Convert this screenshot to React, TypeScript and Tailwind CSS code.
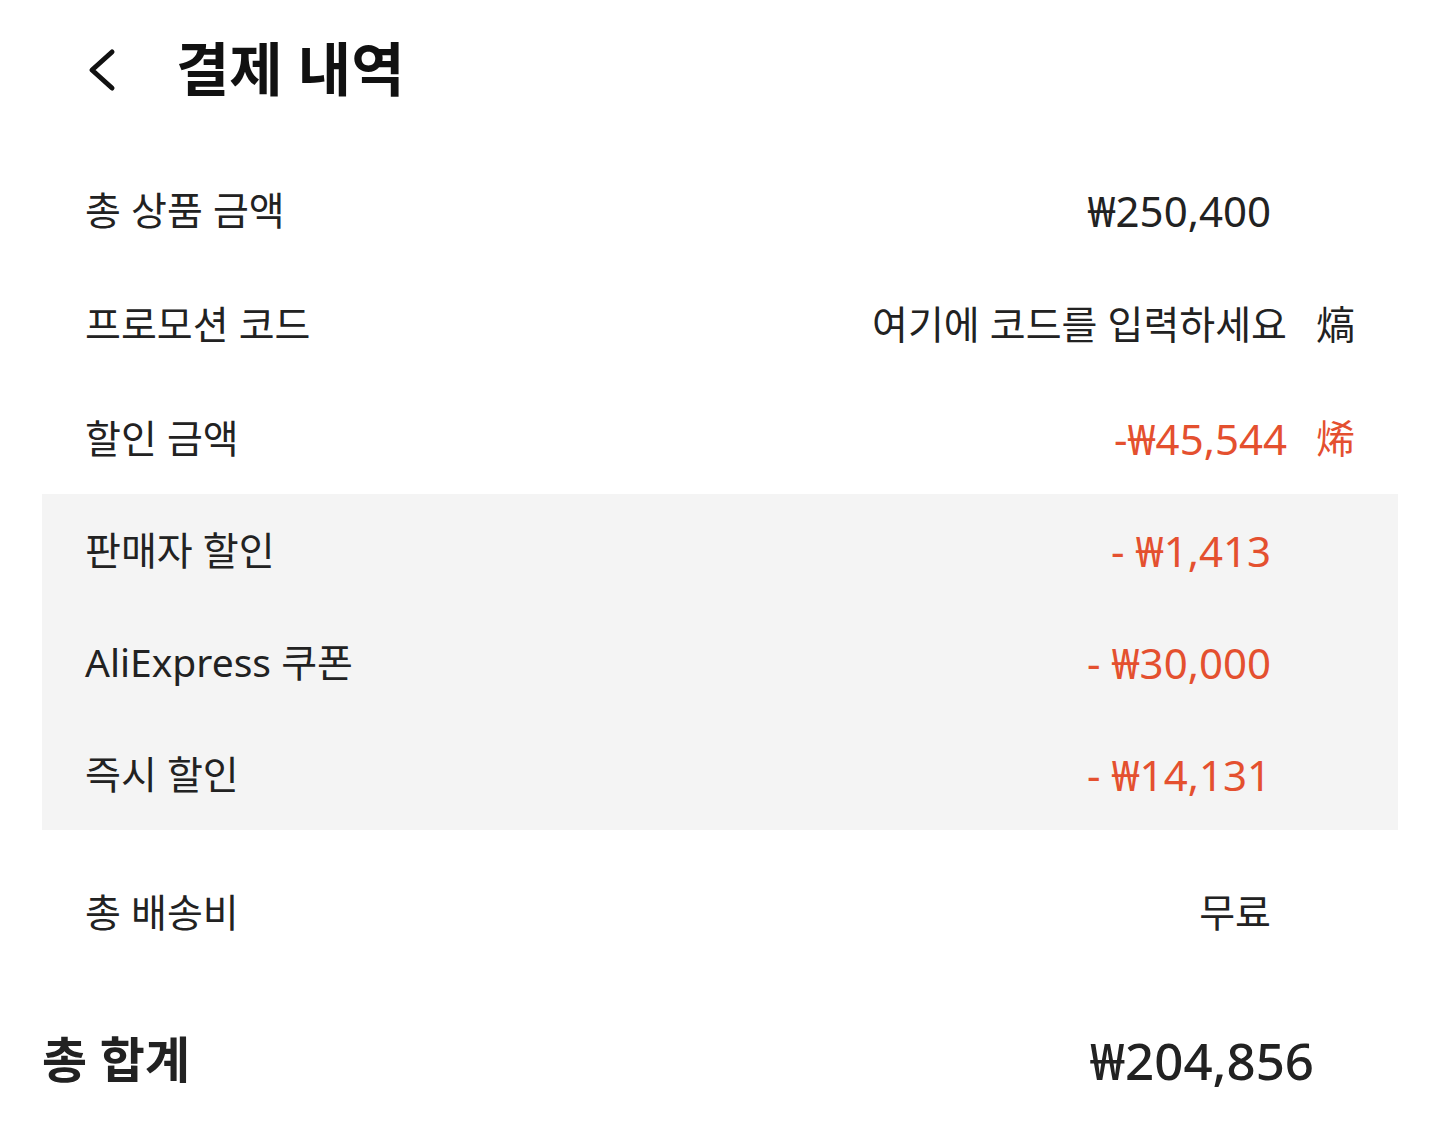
import React from 'react'

const FONT = { fontFamily: '"Noto Sans", "Noto Sans CJK KR", sans-serif' }

function Row({
  label,
  value,
  red = false,
  numeric = true,
  icon,
  className = '',
}: {
  label: string
  value: string
  red?: boolean
  numeric?: boolean
  icon?: string
  className?: string
}) {
  return (
    <div className={`flex items-center justify-between px-[43px] ${className}`}>
      <span className="text-[39px] text-[#222]">{label}</span>
      <div className={`flex items-center ${icon ? '' : 'pr-[84px]'}`}>
        <span
          className={`${numeric ? 'text-[42px]' : 'text-[39px]'} ${red ? 'text-[#e4502f]' : 'text-[#222]'}`}
        >
          {value}
        </span>
        {icon && (
          <span className={`ml-[29px] text-[39px] ${red ? 'text-[#e4502f]' : 'text-[#222]'}`}>{icon}</span>
        )}
      </div>
    </div>
  )
}

export default function App() {
  return (
    <div className="min-h-[1139px] w-[1440px] bg-white" style={FONT}>
      <div className="flex h-[154px] items-start pl-[86px] pt-[36px]">
        <svg width="30" height="44" viewBox="0 0 30 44" className="mt-[12px]">
          <path d="M26 4 L6 22 L26 40" fill="none" stroke="#111" strokeWidth="5" strokeLinecap="round" strokeLinejoin="round" />
        </svg>
        <h1 className="ml-[60px] text-[58px] font-bold leading-[66px] text-[#111]">결제 내역</h1>
      </div>
      <div className="mx-[42px]">
        <Row label="총 상품 금액" value="₩250,400" className="h-[112px]" />
        <Row label="프로모션 코드" value="여기에 코드를 입력하세요" numeric={false} icon="熇" className="h-[116px]" />
        <Row label="할인 금액" value="-₩45,544" red icon="烯" className="h-[112px]" />
        <div className="bg-[#f4f4f4]">
          <Row label="판매자 할인" value="- ₩1,413" red className="h-[112px]" />
          <Row label="AliExpress 쿠폰" value="- ₩30,000" red className="h-[112px]" />
          <Row label="즉시 할인" value="- ₩14,131" red className="h-[112px]" />
        </div>
        <Row label="총 배송비" value="무료" numeric={false} className="mt-[26px] h-[112px]" />
        <div className="mt-[36px] flex h-[112px] items-center justify-between pr-[84px]">
          <span className="text-[49px] font-bold text-[#222]">총 합계</span>
          <span className="text-[51px] font-medium text-[#222]">₩204,856</span>
        </div>
      </div>
    </div>
  )
}
